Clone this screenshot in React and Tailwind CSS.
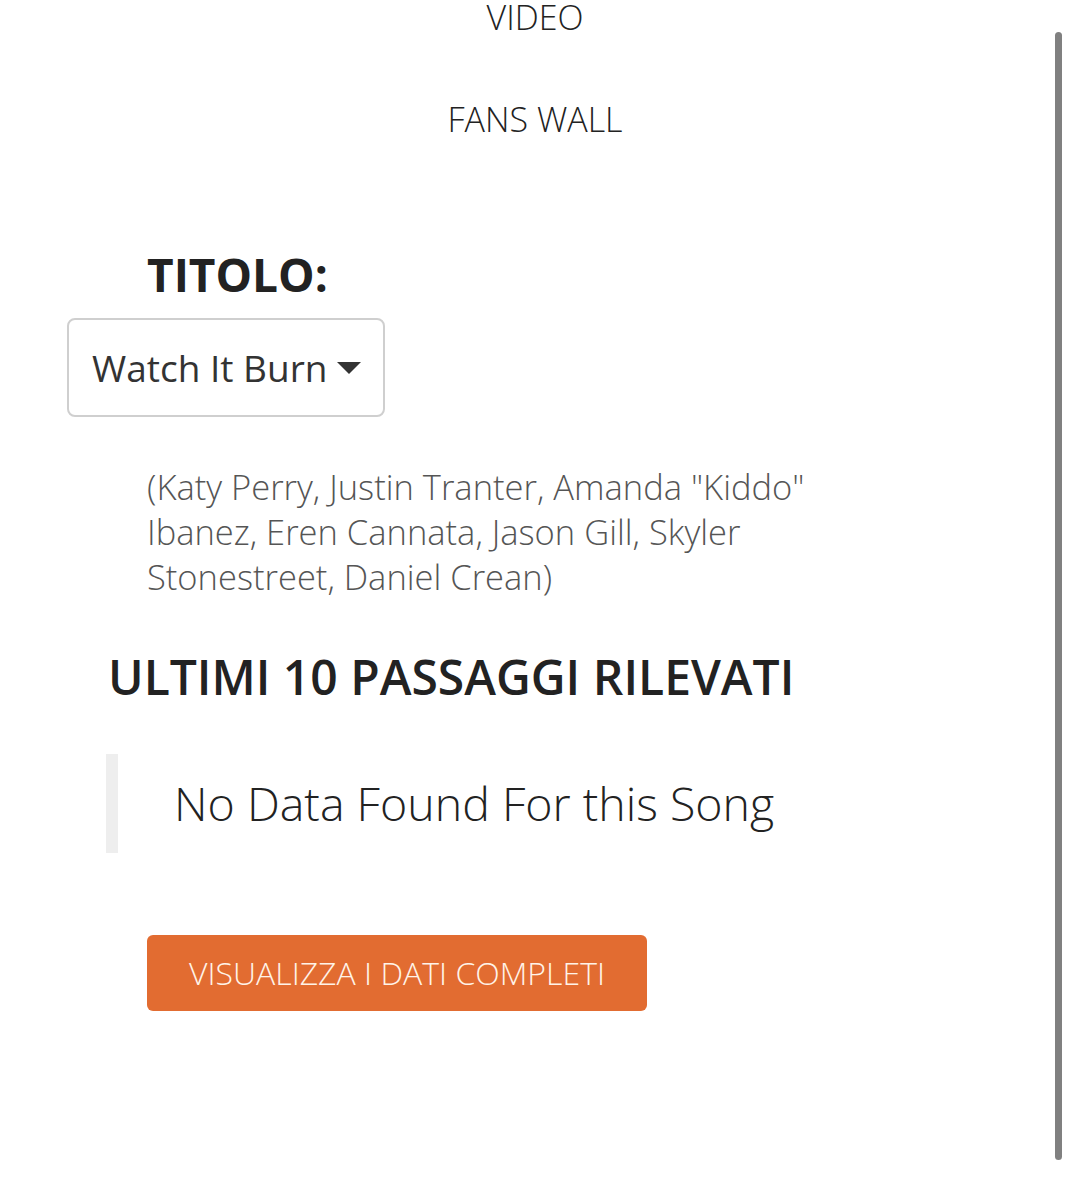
import React from "react";

const font = { fontFamily: '"Open Sans", "Liberation Sans", sans-serif' };

function NavLink({ children }) {
  return (
    <a href="#" className="block text-center text-[34px] font-light leading-none text-[#222] no-underline">
      {children}
    </a>
  );
}

export default function App() {
  return (
    <div className="relative min-h-[1200px] w-[1070px] bg-white" style={font}>
      <nav className="flex flex-col items-center gap-[68px] pt-0">
        <NavLink>VIDEO</NavLink>
        <NavLink>FANS WALL</NavLink>
      </nav>

      <section className="pt-[115px]">
        <h3 className="ml-[147px] text-[46px] font-bold leading-none text-[#222]">TITOLO:</h3>

        <div className="ml-[67px] mt-[21px] flex h-[99px] w-[318px] items-center rounded-[8px] border-2 border-[#cfcfcf] pl-[23px]">
          <span className="text-[37px] leading-none text-[#333]">Watch It Burn</span>
          <svg className="ml-[10px]" width="24" height="12" viewBox="0 0 24 12">
            <path d="M0 0 H24 L12 12 Z" fill="#333" />
          </svg>
        </div>

        <p className="ml-[147px] mt-[47px] w-[690px] text-[34.5px] font-light leading-[45px] text-[#555]">
          (Katy Perry, Justin Tranter, Amanda "Kiddo" Ibanez, Eren Cannata, Jason Gill, Skyler Stonestreet, Daniel Crean)
        </p>

        <h2 className="ml-[108px] mt-[54px] text-[48px] font-semibold leading-none text-[#222]">
          ULTIMI 10 PASSAGGI RILEVATI
        </h2>

        <blockquote className="ml-[106px] mt-[53px] flex h-[99px] items-center border-l-[12px] border-[#eeeeee] pl-[56px]">
          <span className="text-[46.5px] font-light text-[#222]">No Data Found For this Song</span>
        </blockquote>

        <button className="ml-[147px] mt-[82px] flex h-[76px] w-[500px] items-center justify-center rounded-[6px] bg-[#e26c31] text-[32px] font-light text-[#fff3e8]">
          VISUALIZZA I DATI COMPLETI
        </button>
      </section>

      <div className="absolute right-[8px] top-[32px] h-[1128px] w-[7px] rounded-full bg-[#808080]" />
    </div>
  );
}
